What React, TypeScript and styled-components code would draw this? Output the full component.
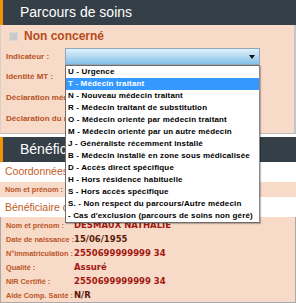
import { FC } from 'react';
import styled, { createGlobalStyle } from 'styled-components';

const GlobalStyle = createGlobalStyle`
  body {
    margin: 0;
    background: #ffffff;
    font-family: 'Liberation Sans', Arial, sans-serif;
  }
`;

const options = [
  'U - Urgence',
  'T - Médecin traitant',
  'N - Nouveau médecin traitant',
  'R - Médecin traitant de substitution',
  'O - Médecin orienté par médecin traitant',
  'M - Médecin orienté par un autre médecin',
  'J - Généraliste récemment installé',
  'B - Médecin installé en zone sous médicalisée',
  'D - Accès direct spécifique',
  'H - Hors résidence habituelle',
  'S - Hors accès spécifique',
  'S. - Non respect du parcours/Autre médecin',
  "- Cas d'exclusion (parcours de soins non géré)",
];

const beneficiaire = [
  { label: 'Nom et prénom :', value: 'DESMAUX NATHALIE', tone: 'red' },
  { label: 'Date de naissance :', value: '15/06/1955', tone: 'dark' },
  { label: 'N°immatriculation :', value: '2550699999999 34', tone: 'red' },
  { label: 'Qualité :', value: 'Assuré', tone: 'red' },
  { label: 'NIR Certifié :', value: '2550699999999 34', tone: 'red' },
  { label: 'Aide Comp. Santé :', value: 'N/R', tone: 'dark' },
];

const App: FC = () => {
  return (
    <Page>
      <GlobalStyle />
      <SectionHeader>Parcours de soins</SectionHeader>
      <Panel>
        <CheckRow>
          <CheckBox />
          <CheckLabel>Non concerné</CheckLabel>
        </CheckRow>
        <FieldRow className="select">
          <FieldLabel>Indicateur :</FieldLabel>
          <SelectWrap>
            <SelectBox>
              <Arrow />
            </SelectBox>
            <DropList>
              {options.map((o) => (
                <DropItem key={o} $active={o.startsWith('T -')}>
                  {o}
                </DropItem>
              ))}
            </DropList>
          </SelectWrap>
        </FieldRow>
        <FieldRow>
          <FieldLabel>Identité MT :</FieldLabel>
        </FieldRow>
        <FieldRow>
          <FieldLabel>Déclaration médecin traitant :</FieldLabel>
        </FieldRow>
        <FieldRow>
          <FieldLabel>Déclaration du médecin traitant :</FieldLabel>
        </FieldRow>
      </Panel>

      <SectionHeader className="second">Bénéficiaire</SectionHeader>
      <SubTitle>Coordonnées</SubTitle>
      <InfoRow className="single">
        <InfoLabel>Nom et prénom :</InfoLabel>
      </InfoRow>
      <SubTitle className="tight">Bénéficiaire de l'assurance maladie</SubTitle>
      <InfoBox>
        {beneficiaire.map((r) => (
          <InfoRow key={r.label}>
            <InfoLabel>{r.label}</InfoLabel>
            <InfoValue $tone={r.tone}>{r.value}</InfoValue>
          </InfoRow>
        ))}
      </InfoBox>
    </Page>
  );
};

export default App;

const Page = styled.div`
  width: 296px;
  height: 303px;
  overflow: hidden;
  display: flex;
  flex-direction: column;
`;

const SectionHeader = styled.div`
  height: 25px;
  flex-shrink: 0;
  box-sizing: border-box;
  background-color: #353f48;
  border-left: 3px solid #f39200;
  padding-left: 17px;
  color: #ffffff;
  font-size: 14px;
  line-height: 25px;
  white-space: nowrap;

  &.second {
    margin-top: 3px;
  }
`;

const Panel = styled.div`
  background-color: #f8dac9;
  border-left: 1px solid #d8cfc8;
  border-right: 2px solid #c4c4c4;
  border-bottom: 1px solid #bdbdbd;
  padding-bottom: 4px;
`;

const CheckRow = styled.div`
  height: 22px;
  display: flex;
  align-items: center;
  padding-left: 8px;
  gap: 6px;
`;

const CheckBox = styled.span`
  width: 7px;
  height: 7px;
  background-color: #c9c9c9;
  border: 1px solid #d6d6d6;
`;

const CheckLabel = styled.span`
  font-size: 12px;
  font-weight: bold;
  color: #b54d1c;
`;

const FieldRow = styled.div`
  height: 21px;
  display: flex;
  align-items: center;
  padding-left: 5px;

  &.select {
    height: 19px;
  }
`;

const FieldLabel = styled.span`
  width: 59px;
  flex-shrink: 0;
  white-space: nowrap;
  font-size: 8px;
  font-weight: bold;
  color: #b6521f;
`;

const SelectWrap = styled.div`
  position: relative;
  width: 195px;
  height: 17px;
`;

const SelectBox = styled.div`
  height: 17px;
  box-sizing: border-box;
  border: 1px solid #8fa7b8;
  background: linear-gradient(#dff0fb 0%, #b9dcf2 45%, #82c0e8 100%);
  display: flex;
  align-items: center;
  justify-content: flex-end;
  padding-right: 4px;
`;

const Arrow = styled.span`
  width: 0;
  height: 0;
  border-left: 3px solid transparent;
  border-right: 3px solid transparent;
  border-top: 4px solid #111;
`;

const DropList = styled.ul`
  position: absolute;
  top: 17px;
  left: 0;
  width: 195px;
  box-sizing: border-box;
  margin: 0;
  padding: 0;
  list-style: none;
  background: #ffffff;
  border: 1px solid #6d6d6d;
  border-right-color: #8a8a8a;
  box-shadow: 1px 1px 1px rgba(0, 0, 0, 0.25);
  z-index: 10;
`;

const DropItem = styled.li<{ $active?: boolean }>`
  height: 12px;
  line-height: 12px;
  padding-left: 2px;
  font-size: 8px;
  font-weight: bold;
  letter-spacing: 0.15px;
  white-space: nowrap;
  overflow: hidden;
  color: ${(p) => (p.$active ? '#ffffff' : '#000000')};
  background-color: ${(p) => (p.$active ? '#3399ff' : 'transparent')};
`;

const SubTitle = styled.div`
  height: 19px;
  line-height: 19px;
  padding-left: 5px;
  font-size: 10.5px;
  color: #c25c26;
  white-space: nowrap;

  &.tight {
    height: 20px;
    line-height: 20px;
  }
`;

const InfoBox = styled.div`
  background-color: #f8dac9;
  border: 1px solid #a9a9a9;
  border-top: none;
  padding-top: 1px;
`;

const InfoRow = styled.div`
  height: 14px;
  display: flex;
  align-items: center;
  padding-left: 5px;

  &.single {
    height: 15px;
    margin-top: 1px;
    background-color: #f8dac9;
  }
`;

const InfoLabel = styled.span`
  width: 68px;
  flex-shrink: 0;
  white-space: nowrap;
  font-size: 7.3px;
  font-weight: bold;
  color: #bb5526;
`;

const InfoValue = styled.span<{ $tone: string }>`
  font-family: 'DejaVu Sans', Verdana, sans-serif;
  font-size: 8.5px;
  font-weight: bold;
  color: ${(p) => (p.$tone === 'red' ? '#a0180f' : '#5a1c08')};
`;
